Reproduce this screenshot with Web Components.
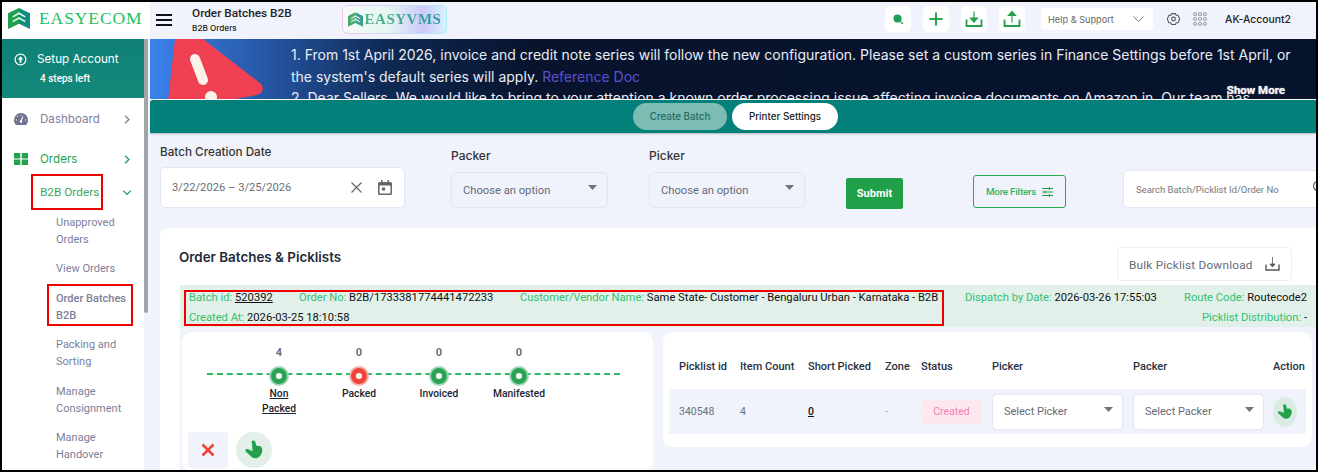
<!DOCTYPE html>
<html>
<head>
<meta charset="utf-8">
<title>Order Batches B2B</title>
<style>
html, body { margin: 0; padding: 0; background: #000; }
body { font-family: Roboto, "Liberation Sans", sans-serif; }
notice-banner a { color: #5f4fd0; }
</style>
</head>
<body>
<app-shell>
  <top-bar slot="top"></top-bar>
  <side-nav slot="side"></side-nav>
  <notice-banner>
    <div>1. From 1st April 2026, invoice and credit note series will follow the new configuration. Please set a custom series in Finance Settings before 1st April, or the system's default series will apply. <a>Reference Doc</a></div>
    <div>2. Dear Sellers, We would like to bring to your attention a known order processing issue affecting invoice documents on Amazon in. Our team has</div>
  </notice-banner>
  <action-bar></action-bar>
  <filter-bar></filter-bar>
  <batch-card></batch-card>
</app-shell>

<script>
const ICONS = {
  hand: `<svg viewBox="0 0 24 24" width="100%" height="100%"><path fill="#23a04a" d="M9.500 2.500c.6-1.300 3.200-1.300 3.800.3l1.400 4.700c2.500-.6 5.300.2 6 2.500.9 3.300-.2 7-3.200 9.500-2.300 1.800-5.500 2.200-7.800.3L3 13.500c-1-1.300.3-3 2-2.500l5.500 2.300z"/></svg>`,
  caret: `<svg viewBox="0 0 10 6" width="9" height="5.500"><path fill="#757575" d="M0 0h10L5 5.500z"/></svg>`,
  chevron: `<svg viewBox="0 0 8 12" width="6" height="9"><path d="M1.500 1l5 5-5 5" fill="none" stroke="currentColor" stroke-width="1.800"/></svg>`
};

function comp(tag, html, extra) {
  const template = document.createElement('template');
  template.innerHTML = html;
  class Comp extends HTMLElement {
    constructor() {
      super();
      this.attachShadow({mode: 'open'});
      this.shadowRoot.appendChild(template.content.cloneNode(true));
      if (extra) extra.call(this);
    }
  }
  customElements.define(tag, Comp);
}

comp('app-shell', `
<style>
:host { display: grid; box-sizing: border-box; width: 1318px; height: 472px; border: 2px solid #000; background: #f0f3fb; overflow: hidden;
  grid-template-columns: 148px 1166px; grid-template-rows: 37px 431px; }
.top { grid-column: 1 / 3; }
main { display: flex; flex-direction: column; min-width: 0; overflow: hidden; }
</style>
<div class="top"><slot name="top"></slot></div>
<slot name="side"></slot>
<main><slot></slot></main>
`);

comp('top-bar', `
<style>
:host { display: flex; height: 37px; background: #f0f3fb; border-bottom: 1px solid #dfe3ee; box-sizing: content-box; margin-bottom: -1px; }
.logo { width: 148px; background: #fff; display: flex; align-items: center; gap: 9px; padding: 0 0 5px 6px; box-sizing: border-box; }
.brand { font: 17.500px "Liberation Serif", serif; color: #22c15e; letter-spacing: .9px; white-space: nowrap; }
.burger { width: 16px; height: 12px; margin: -2px 0 0 6px; border-top: 2px solid #111; border-bottom: 2px solid #111; position: relative; box-sizing: border-box; align-self: center; }
.burger::after { content: ""; position: absolute; left: 0; right: 0; top: 3px; height: 2px; background: #111; }
.title { margin-left: 20px; width: 150px; font: 500 11.800px Roboto, sans-serif; color: #222; padding-top: 3px; line-height: 16px; white-space: nowrap; }
.title small { display: block; font: 500 8.200px/15px Inter, sans-serif; color: #222; }
.vms { width: 105px; height: 29px; margin: 3px 0 0 0; box-sizing: border-box; border-radius: 6px; padding: 1px; background: linear-gradient(90deg, #f3c6ef, #c9dcf8 60%, #a9ecf8); }
.vms div { height: 100%; border-radius: 5px; background: linear-gradient(90deg, #f7fbf9, #e3f5f2 45%, #cdc9fb 78%, #d8f2fb); display: flex; align-items: center; justify-content: center; gap: 2px; }
.vms span { font: bold 15px "Liberation Serif", serif; letter-spacing: .5px; color: transparent; background: linear-gradient(90deg, #55b37f, #2c9aa0); -webkit-background-clip: text; background-clip: text; }
.right { margin-left: auto; display: flex; align-items: center; height: 34px; }
.ib { width: 26px; height: 26px; background: #fff; border-radius: 5px; display: flex; align-items: center; justify-content: center; margin-right: 12px; }
.help { width: 112px; height: 22px; margin-left: 4px; background: #fff; border-radius: 4px; font: 9.200px Inter, sans-serif; color: #666; display: flex; align-items: center; justify-content: space-between; padding: 0 9px 0 7px; box-sizing: border-box; }
.acct { font: 500 10.400px Inter, sans-serif; color: #222; margin: 0 25px 0 18px; white-space: nowrap; }
.ic { margin-left: 13px; display: flex; }
</style>
<div class="logo">
  <svg width="22" height="21" viewBox="0 0 21 20"><path fill="#22a050" d="M10.500 0L0 5v15l10.500-5z"/><path fill="#0c8f7f" d="M10.500 0L21 5v15l-10.500-5z"/><path fill="none" stroke="#e6f7ee" stroke-width="1.500" d="M4.500 8.500l6-3.500 6 3.500M4.500 13l6-3.500 6 3.500"/></svg>
  <span class="brand">EASYECOM</span>
</div>
<div class="burger"></div>
<div class="title">Order Batches B2B<small>B2B Orders</small></div>
<div class="vms"><div>
  <svg width="15" height="15" viewBox="0 0 21 20"><path fill="#4ea86a" d="M10.500 0L0 5v15l10.500-5z"/><path fill="#3d9f8c" d="M10.500 0L21 5v15l-10.500-5z"/><path fill="none" stroke="#e6f7ee" stroke-width="1.600" d="M4.500 8.500l6-3.500 6 3.500M4.500 13l6-3.500 6 3.500"/></svg>
  <span>EASYVMS</span></div></div>
<div class="right">
  <div class="ib"><svg width="14" height="14" viewBox="0 0 14 14"><circle cx="6.500" cy="6.500" r="4" fill="#1f9d55"/><path d="M9.500 9.500l2.500 2.500" stroke="#1f9d55" stroke-width="1.200"/></svg></div>
  <div class="ib"><svg width="16" height="16" viewBox="0 0 16 16"><path d="M8 1.500v13M1.500 8h13" stroke="#23a04a" stroke-width="2"/></svg></div>
  <div class="ib"><svg width="18" height="18" viewBox="0 0 18 18"><path d="M1.500 9.500v6.500h15V9.500" fill="none" stroke="#23a04a" stroke-width="1.800"/><path d="M9 1.500v9M5.500 8L9 12l3.500-4z" fill="#23a04a" stroke="#23a04a" stroke-width="1.200"/></svg></div>
  <div class="ib" style="margin-right:12px"><svg width="18" height="18" viewBox="0 0 18 18"><path d="M1.500 9.500v6.500h15V9.500" fill="none" stroke="#23a04a" stroke-width="1.800"/><path d="M9 12.500V4M5.500 5.500L9 1.500l3.500 4z" fill="#23a04a" stroke="#23a04a" stroke-width="1.200"/></svg></div>
  <div class="help"><span>Help &amp; Support</span><svg width="11" height="6" viewBox="0 0 11 6"><path d="M.500.500l5 5 5-5" fill="none" stroke="#777" stroke-width="1"/></svg></div>
  <div class="ic" style="margin-left:14px"><svg width="13" height="14" viewBox="0 0 24 24"><path fill="none" stroke="#555" stroke-width="2" stroke-linejoin="round" d="M8.500 2h7l1.500 3 3.500.3 3 6.700-3 6.700-3.500.3-1.500 3h-7L7 19l-3.500-.3L.5 12l3-6.700L7 5z"/><circle cx="12" cy="12" r="3.500" fill="none" stroke="#555" stroke-width="2"/></svg></div>
  <div class="ic"><svg width="14" height="14" viewBox="0 0 14 14" fill="none" stroke="#777" stroke-width=".8"><rect x=".7" y=".7" width="2.800" height="2.800" rx="1"/><rect x="5.600" y=".7" width="2.800" height="2.800" rx="1"/><rect x="10.500" y=".7" width="2.800" height="2.800" rx="1"/><rect x=".7" y="5.600" width="2.800" height="2.800" rx="1"/><rect x="5.600" y="5.600" width="2.800" height="2.800" rx="1"/><rect x="10.500" y="5.600" width="2.800" height="2.800" rx="1"/><rect x=".7" y="10.500" width="2.800" height="2.800" rx="1"/><rect x="5.600" y="10.500" width="2.800" height="2.800" rx="1"/><rect x="10.500" y="10.500" width="2.800" height="2.800" rx="1"/></svg></div>
  <div class="acct">AK-Account2</div>
</div>
`);

comp('side-nav', `
<style>
:host { display: flex; background: #f0f3fb; min-height: 0; overflow: hidden; }
.col { width: 142px; background: #fff; height: 431px; overflow: hidden; }
.bar { width: 4px; height: 274px; background: #a2a5a8; border-radius: 0 0 2px 2px; }
.setup { height: 59px; background: linear-gradient(180deg, #108077, #12897a); color: #fff; box-sizing: border-box; padding: 11px 0 0 12px; }
.setup .h { display: flex; align-items: center; gap: 10px; font: 11.700px Inter, sans-serif; height: 18px; }
.setup .s { font: 500 10px Roboto, sans-serif; margin: 5px 0 0 26px; line-height: 12px; }
nav { display: flex; flex-direction: column; }
.main { display: flex; align-items: center; height: 20px; font: 11.600px Inter, Roboto, sans-serif; color: #7c809b; padding-left: 12px; }
.main svg.i { margin-right: 12px; }
.main .ch { margin-left: auto; margin-right: 14px; display: flex; }
.green { color: #22a24d; }
.b2b { position: relative; display: flex; align-items: center; font: 400 11.800px Roboto, sans-serif; padding-left: 38px; height: 20px; margin-top: 13px; color: #3fa55a; }
.b2b .ch { margin-left: auto; margin-right: 14px; transform: rotate(90deg); display: flex; color: #22a24d; }
.mark { position: absolute; border: 2px solid #ee0000; box-sizing: border-box; }
.sub { position: relative; font: 400 11px/17px Roboto, sans-serif; color: #7c809b; margin-left: 54px; width: 80px; }
</style>
<div class="col">
  <div class="setup">
    <div class="h"><svg width="13" height="13" viewBox="0 0 14 14"><circle cx="7" cy="7" r="5.800" fill="none" stroke="#fff" stroke-width="1.300"/><path d="M7 3.500L10 7H8v3.500H6V7H4z" fill="#fff"/></svg><span>Setup Account</span></div>
    <div class="s">4 steps left</div>
  </div>
  <nav>
    <div class="main" style="margin-top:11px"><svg class="i" width="14" height="12" viewBox="0 0 14 12"><path d="M7 0a7 7 0 0 0-7 7c0 2 .7 3.500 1.800 5h10.400C13.300 10.500 14 9 14 7a7 7 0 0 0-7-7z" fill="#6f7390"/><path d="M7 8l2-4.500M3 7h-1M12 7h-1M4 3.500l-.7-.7M7 2.800V2" stroke="#fff" stroke-width="1.100"/><circle cx="7" cy="8.500" r="1.300" fill="#fff"/></svg>Dashboard<span class="ch">${ICONS.chevron}</span></div>
    <div class="main green" style="margin-top:20px"><svg class="i" width="14" height="12" viewBox="0 0 14 12"><path fill="#22a24d" d="M0 0h6.300v5.500H0zM7.700 0H14v5.500H7.700zM0 6.500h6.300V12H0zM7.700 6.500H14V12H7.700z"/></svg>Orders<span class="ch">${ICONS.chevron}</span></div>
    <div class="b2b"><span>B2B Orders</span><span class="ch">${ICONS.chevron}</span><span class="mark" style="left:29px;top:-8px;width:72px;height:36px"></span></div>
    <div class="sub" style="margin-top:12px">Unapproved Orders</div>
    <div class="sub" style="margin-top:12px">View Orders</div>
    <div class="sub green" style="margin-top:13px;font-weight:500">Order Batches B2B<span class="mark" style="left:-9px;top:-6px;width:86px;height:42px"></span></div>
    <div class="sub" style="margin-top:12px">Packing and Sorting</div>
    <div class="sub" style="margin-top:13px">Manage Consignment</div>
    <div class="sub" style="margin-top:12px">Manage Handover</div>
  </nav>
</div>
<div class="bar"></div>
`);

comp('notice-banner', `
<style>
:host { display: block; flex: none; position: relative; height: 61px; overflow: hidden; color: #e8edf5;
  background: linear-gradient(90deg, #3b82ec 0, #2a5fb4 8%, #0f2a55 20%, #08142e 32%, #06132d 100%); border-bottom: 1px solid #fff; box-sizing: border-box; }
svg { position: absolute; left: 14px; top: -8px; }
.txt { margin-left: 141px; padding-top: 5px; width: 1005px; font: 14px/21.500px Inter, "Open Sans", sans-serif; }
::slotted(div) { display: block; }
.more { position: absolute; right: 31px; top: 44px; font: bold 11.500px Roboto, sans-serif; color: #f0f0f0; text-shadow: 0 0 1px #fff; }
</style>
<svg width="110" height="70" viewBox="0 0 110 70"><path fill="#ef4152" d="M4 70L11 8h28l57 44c5 5 3 10-3 12L60 70z"/><path d="M31 28l8 21" stroke="#fdf3ea" stroke-width="10" stroke-linecap="round"/><circle cx="47" cy="66" r="6" fill="#fdf3ea"/></svg>
<div class="txt"><slot></slot></div>
<div class="more">Show More</div>
`);

comp('action-bar', `
<style>
:host { display: flex; flex: none; justify-content: flex-start; align-items: center; gap: 5px; height: 33px; background: #04807a; padding-left: 483px; border-radius: 3px 0 0 0; box-shadow: 0 1px 2px rgba(0,0,0,.25); position: relative; }
.b { height: 27px; border-radius: 14px; display: flex; align-items: center; justify-content: center; font: 500 9.800px Inter, sans-serif; box-sizing: border-box; }
.a { width: 94px; background: #7cbcb5; color: #256b63; }
.p { width: 106px; background: #fff; color: #222; }
</style>
<div class="b a">Create Batch</div>
<div class="b p">Printer Settings</div>
`);

comp('field-select', `
<style>
:host { display: block; width: var(--w, 157px); }
label { display: block; font: 500 12px Inter, sans-serif; color: #333; margin-bottom: 9px; line-height: 14px; }
.box { height: 36px; border: 1px solid #e1e5f5; border-radius: 5px; display: flex; align-items: center; justify-content: space-between; padding: 0 10px 0 11px; font: 11.200px Roboto, sans-serif; color: #666b78; box-sizing: border-box; }
.box svg { margin-top: -4px; }
</style>
<label></label>
<div class="box"><span>Choose an option</span>${ICONS.caret}</div>
`, function() { this.shadowRoot.querySelector('label').textContent = this.getAttribute('label'); });

comp('filter-bar', `
<style>
:host { display: flex; flex: none; align-items: flex-end; height: 95px; padding: 0 0 20px 10px; box-sizing: border-box; background: #f0f3fb; }
.date { width: 245px; flex: none; }
.date label { display: block; font: 500 11.700px/14px Inter, sans-serif; color: #333; margin-bottom: 8px; }
.dbox { height: 41px; box-sizing: border-box; background: #fff; border: 1px solid #e1e5f5; border-radius: 5px; display: flex; align-items: center; padding: 0 12px 0 11px; font: 11.200px Roboto, sans-serif; color: #6b6e76; }
.dbox span { margin-right: auto; }
.dbox svg { margin-left: 16px; }
field-select { flex: none; }
.submit { flex: none; width: 57px; height: 31px; margin-left: 41px; margin-bottom: -1px; background: #21a04a; border-radius: 2px; color: #fff; font: bold 11px Roboto, sans-serif; display: flex; align-items: center; justify-content: center; }
.filters { flex: none; width: 93px; height: 33px; margin-left: 70px; box-sizing: border-box; border: 1px solid #28ab52; border-radius: 3px; display: flex; align-items: center; justify-content: center; gap: 6px; color: #2cb565; font: 500 9.800px Roboto, sans-serif; letter-spacing: -.2px; }
.search { flex: none; width: 220px; height: 38px; margin-left: 57px; background: #fff; border: 1px solid #e1e5f5; border-radius: 5px; box-sizing: border-box; font: 9.500px Roboto, sans-serif; color: #777; display: flex; align-items: center; padding-left: 12px; position: relative; }
.search svg { position: absolute; left: 188px; top: 9px; }
</style>
<div class="date"><label>Batch Creation Date</label>
  <div class="dbox"><span>3/22/2026 – 3/25/2026</span>
    <svg width="11" height="11" viewBox="0 0 11 11"><path d="M.5.500l10 10M10.500.500l-10 10" stroke="#666" stroke-width="1.200"/></svg>
    <svg width="14" height="15" viewBox="0 0 14 15"><path fill="#666" d="M3 0h1.500v2h5V0H11v2h1.500A1.500 1.500 0 0 1 14 3.500v10a1.500 1.500 0 0 1-1.500 1.500h-11A1.500 1.500 0 0 1 0 13.500v-10A1.500 1.500 0 0 1 1.500 2H3zM1.500 5.500v8h11v-8zM4 7.500h3v3H4z"/></svg>
  </div>
</div>
<field-select label="Packer" style="margin-left:46px"></field-select>
<field-select label="Picker" style="margin-left:41px;--w:156px"></field-select>
<div class="submit">Submit</div>
<div class="filters">More Filters <svg width="11" height="10" viewBox="0 0 11 10"><path d="M0 1.500h11M0 5h11M0 8.500h11M7.500 0v3M3 3.500v3M7.500 7v3" stroke="#23a04a" stroke-width="1.100"/></svg></div>
<div class="search">Search Batch/Picklist Id/Order No<svg width="14" height="14" viewBox="0 0 14 14"><circle cx="6" cy="6" r="4.500" fill="none" stroke="#666" stroke-width="1.300"/></svg></div>
`);

comp('batch-info', `
<style>
:host { display: block; height: 42px; background: #e1f0e9; position: relative; font: 11.200px/20px Roboto, sans-serif; color: #111; padding: 3px 0 0 9px; box-sizing: border-box; }
.row { display: grid; grid-template-columns: 110px 221px 445px 219px auto; white-space: nowrap; height: 20px; }
b { font-weight: 400; color: #35c071; }
u { text-decoration: underline; }
.r2 { display: flex; justify-content: space-between; padding-right: 9px; height: 20px; }
.mark { position: absolute; left: 4px; top: 5px; width: 760px; height: 36px; border: 2px solid #ee0000; box-sizing: border-box; }
</style>
<div class="row">
  <span><b>Batch id:</b> <u>520392</u></span>
  <span><b>Order No:</b> B2B/1733381774441472233</span>
  <span><b>Customer/Vendor Name:</b> Same State- Customer - Bengaluru Urban - Karnataka - B2B</span>
  <span><b>Dispatch by Date:</b> 2026-03-26 17:55:03</span>
  <span><b>Route Code:</b> Routecode2</span>
</div>
<div class="r2">
  <span><b>Created At:</b> 2026-03-25 18:10:58</span>
  <span><b>Picklist Distribution:</b> -</span>
</div>
<div class="mark"></div>
`);

comp('track-step', `
<style>
:host { display: flex; flex-direction: column; align-items: center; width: 80px; font: 500 10.300px/15px Roboto, sans-serif; color: #1c2333; text-align: center; }
.n { font: bold 11px/14px Roboto, sans-serif; color: #6b7080; height: 14px; margin-bottom: 8px; }
.dot { width: 16px; height: 16px; border-radius: 50%; box-sizing: border-box; border: 5.500px solid var(--c, #2aa352); background: #fff; box-shadow: 0 0 0 2px var(--h, #a9d5b8); margin-bottom: 2px; position: relative; }
.l { width: 40px; display: flex; justify-content: center; }
</style>
<div class="n"></div>
<div class="dot"></div>
<div class="l"><span><slot></slot></span></div>
`, function() { this.shadowRoot.querySelector('.n').textContent = this.getAttribute('n'); });

comp('status-tracker', `
<style>
:host { display: block; flex: none; width: 471px; height: 140px; background: #fff; border-radius: 10px; box-sizing: border-box; padding-top: 14px; }
.track { position: relative; display: flex; padding-left: 57px; height: 86px; }
.track::before { content: ""; position: absolute; left: 25px; width: 413px; top: 27px; border-top: 2px dashed #2dbb62; }
track-step { position: relative; }
.btns { display: flex; gap: 8px; align-items: center; padding-left: 6px; }
.x { width: 40px; height: 36px; background: #f0f3fb; border-radius: 4px; display: flex; align-items: center; justify-content: center; }
.h { width: 36px; height: 36px; border-radius: 50%; background: #e2f0e9; padding: 7px; box-sizing: border-box; }
</style>
<div class="track">
  <track-step n="4"><u>Non Packed</u></track-step>
  <track-step n="0" style="--c:#ee4438;--h:#f4b3ae">Packed</track-step>
  <track-step n="0">Invoiced</track-step>
  <track-step n="0">Manifested</track-step>
</div>
<div class="btns">
  <div class="x"><svg width="14" height="14" viewBox="0 0 14 14"><path d="M1.500 1.500l11 11M12.500 1.500l-11 11" stroke="#ee4438" stroke-width="2.600"/></svg></div>
  <div class="h">${ICONS.hand}</div>
</div>
`);

comp('select-box', `
<style>
:host { display: flex; width: 131px; height: 36px; background: #fff; border: 1px solid #e1e5f5; border-radius: 5px; box-sizing: border-box; align-items: center; justify-content: space-between; padding: 0 9px 0 11px; font: 11px Roboto, sans-serif; color: #666b78; }
svg { margin-top: -4px; }
</style>
<slot></slot>${ICONS.caret}
`);

comp('picklist-table', `
<style>
:host { display: block; flex: none; width: 649px; height: 115px; background: #fff; border-radius: 10px; box-sizing: border-box; padding: 0 6px; }
.g { display: grid; grid-template-columns: 61px 68px 77px 36px 71px 141px 140px auto; padding-left: 10px; align-items: center; }
.head { height: 57px; padding-top: 11px; box-sizing: border-box; font: 500 11px Roboto, sans-serif; color: #2a3142; white-space: nowrap; }
.row { height: 45px; background: #f0f3fb; font: 10.500px Roboto, sans-serif; color: #6b7080; }
.badge { width: 61px; height: 24px; margin-left: 0; background: #fde8ef; border-radius: 3px; color: #f77fb2; display: flex; align-items: center; justify-content: center; }
.hd { width: 24px; height: 30px; border-radius: 50%; background: #d9ebe2; margin-left: 0; padding: 5px 3px; box-sizing: border-box; }
u { color: #111; font-weight: 500; }
.dash { color: #aaa; }
</style>
<div class="g head"><span>Picklist id</span><span>Item Count</span><span>Short Picked</span><span>Zone</span><span>Status</span><span>Picker</span><span>Packer</span><span>Action</span></div>
<div class="g row"><span>340548</span><span>4</span><span><u>0</u></span><span class="dash">-</span><span class="badge">Created</span><select-box>Select Picker</select-box><select-box>Select Packer</select-box><div class="hd">${ICONS.hand}</div></div>
`);

comp('batch-card', `
<style>
:host { display: flex; flex-direction: column; flex: 1; margin-left: 10px; background: #fff; border-radius: 8px 0 0 0; padding-left: 20px; min-height: 0; }
.head { display: flex; justify-content: space-between; height: 57px; flex: none; }
h2 { margin: 21px 0 0 -1px; font: 600 13.400px/16px Inter, sans-serif; color: #232a38; }
.bulk { margin: 19px 24px 0 0; width: 175px; height: 34px; box-sizing: border-box; border: 1px solid #eceef6; border-radius: 4px; display: flex; align-items: center; justify-content: space-between; padding: 1px 11px 0; font: 11.800px Roboto, sans-serif; color: #666b78; letter-spacing: .2px; }
.bulk svg { margin-top: -2px; }
.below { flex: 1; background: #f0f3fb; padding: 5px 0 0 2px; display: flex; gap: 10px; }
</style>
<div class="head">
  <h2>Order Batches &amp; Picklists</h2>
  <div class="bulk">Bulk Picklist Download <svg width="15" height="15" viewBox="0 0 15 15"><path d="M1 8.500v5.500h13V8.500" fill="none" stroke="#555" stroke-width="1.400"/><path d="M7.500 1v9M5 8l2.500 3L10 8z" fill="#555" stroke="#555" stroke-width=".8"/></svg></div>
</div>
<batch-info></batch-info>
<div class="below">
  <status-tracker></status-tracker>
  <picklist-table></picklist-table>
</div>
`);
</script>
</body>
</html>
